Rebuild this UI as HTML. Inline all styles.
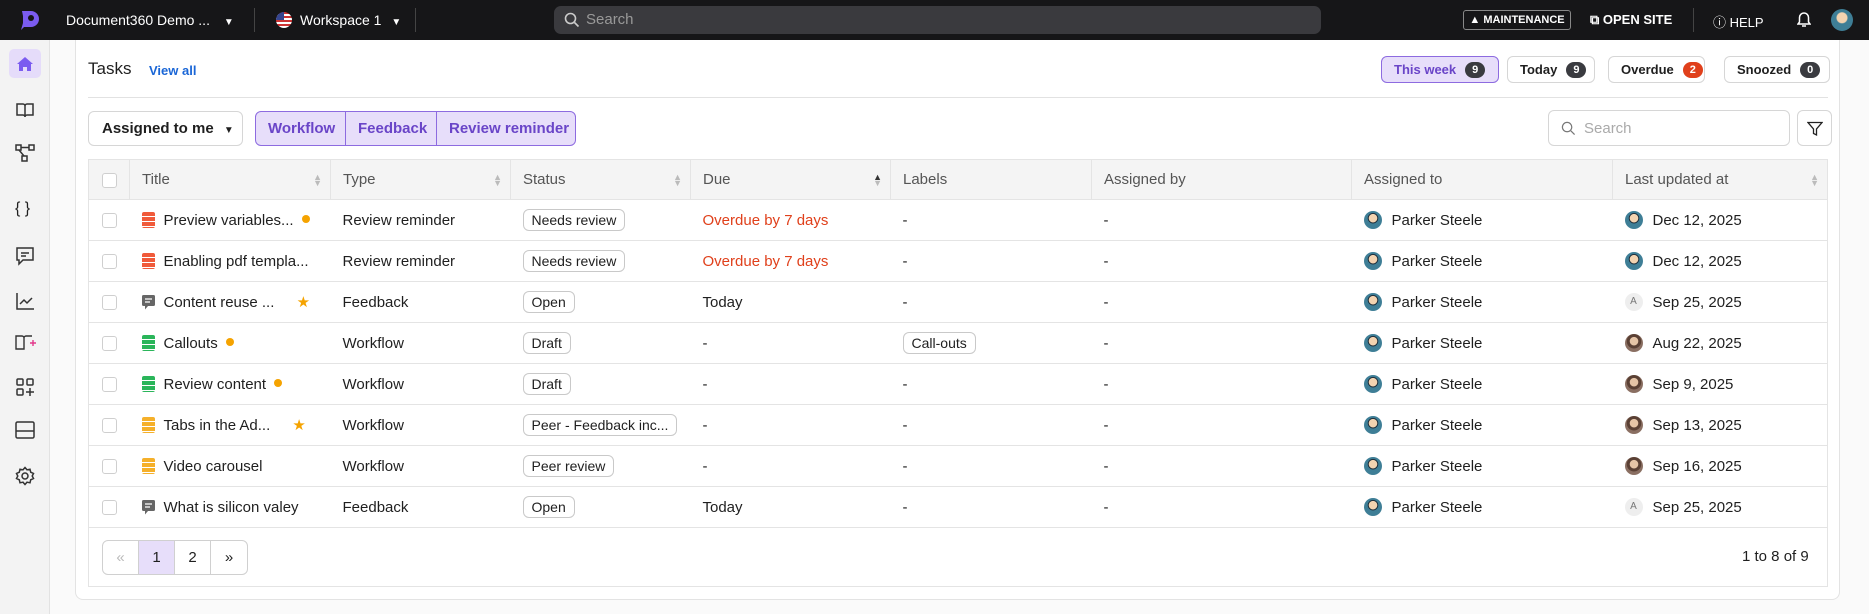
<!DOCTYPE html>
<html><head><meta charset="utf-8"><style>
*{box-sizing:border-box;margin:0;padding:0}
body{width:1869px;height:614px;overflow:hidden;font-family:"Liberation Sans",sans-serif;background:#fafafa;color:#1f1f1f;position:relative;font-size:15px}
.top{position:absolute;left:0;top:0;width:1869px;height:40px;background:#161618;color:#fff}
.top div{position:absolute}
.side{position:absolute;left:0;top:40px;width:50px;height:574px;background:#f3f3f3;border-right:1px solid #e2e2e2}
.side svg{position:absolute;left:15px}
.card{position:absolute;left:75px;top:40px;width:1765px;height:560px;background:#fff;border:1px solid #e3e3e3;border-top:none;border-radius:0 0 8px 8px}
.abs{position:absolute}
.pill{position:absolute;top:56px;height:27px;border:1px solid #d6d6d6;border-radius:6px;font-size:13px;font-weight:bold;display:flex;align-items:center;padding-left:12px}
.badge{display:inline-block;background:#3a3b40;color:#fff;border-radius:8px;font-size:11px;padding:2px 7px;margin-left:9px}
table{position:absolute;left:88px;top:159px;width:1740px;border-collapse:collapse;font-size:15px}
th{height:40px;background:#f4f4f4;color:#555;font-weight:normal;text-align:left;padding-left:12px;border:1px solid #e4e4e4;position:relative}
td{height:41px;border-bottom:1px solid #e4e4e4;padding-left:12px;white-space:nowrap}
td:first-child,th:first-child{padding-left:13px}
.cb{display:inline-block;width:15px;height:15px;border:1px solid #cfcfcf;border-radius:3px;background:#fff;vertical-align:middle}
.tag{display:inline-block;border:1px solid #c9c9c9;border-radius:6px;padding:2px 8px;font-size:14px}
.od{color:#e0401b}
.ic{display:inline-block;width:13px;height:16px;border-radius:2px;vertical-align:-3px;margin-right:9px;background:repeating-linear-gradient(#0000 0 4px,#fff 4px 5px),var(--c)}
.fb{display:inline-block;vertical-align:-3px;margin-right:9px}
.dot{display:inline-block;width:8px;height:8px;border-radius:50%;background:#f5a300;margin-left:8px;vertical-align:2px}
.av{display:inline-block;width:18px;height:18px;border-radius:50%;background:radial-gradient(circle at 50% 40%,#f3d3b0 0 4px,#1d2d3a 4.5px 5px,#3e7e96 5.5px);vertical-align:-4px;margin-right:10px}
.av2{background:radial-gradient(circle at 50% 40%,#e5c4a6 0 4px,#5a4034 4.5px 7px,#8a6f62 7.5px)}
.avA{background:#eee;color:#777;font-size:10px;text-align:center;line-height:18px;overflow:hidden}
.sort{position:absolute;right:8px;top:14px;color:#bbb;font-size:9px;line-height:6px}
</style></head><body>
<div class="top">
 <div style="left:18px;top:8px;width:24px;height:24px"><svg width="24" height="24" viewBox="0 0 24 24"><path d="M4 3h9a8 8 0 0 1 0 16H6l-3 3 2-7V8" fill="#7b5cf0"/><circle cx="13" cy="10" r="3" fill="#161618"/></svg></div>
 <div style="left:66px;top:12px;font-size:14px">Document360 Demo ... <span style="margin-left:10px;font-size:10px">▼</span></div>
 <div style="left:254px;top:8px;width:1px;height:24px;background:#444"></div>
 <div style="left:276px;top:12px;width:16px;height:16px;border-radius:50%;background:repeating-linear-gradient(#c33 0 2px,#fff 2px 4px);overflow:hidden"><div style="width:8px;height:8px;background:#35458e"></div></div>
 <div style="left:300px;top:12px;font-size:14px">Workspace 1 <span style="margin-left:6px;font-size:10px">▼</span></div>
 <div style="left:415px;top:8px;width:1px;height:24px;background:#444"></div>
 <div style="left:554px;top:6px;width:767px;height:28px;background:#3a3a3e;border-radius:7px;color:#999;font-size:15px;padding:5px 0 0 32px">Search<svg style="position:absolute;left:10px;top:6px" width="16" height="16" viewBox="0 0 16 16"><circle cx="6.5" cy="6.5" r="5" fill="none" stroke="#ccc" stroke-width="1.6"/><path d="M10.5 10.5l4 4" stroke="#ccc" stroke-width="1.6"/></svg></div>
 <div style="left:1463px;top:10px;width:108px;height:20px;border:1px solid #888;border-radius:3px;font-size:11px;font-weight:bold;text-align:center;line-height:18px">▲ MAINTENANCE</div>
 <div style="left:1590px;top:12px;font-size:13px;font-weight:bold">⧉ OPEN SITE</div>
 <div style="left:1693px;top:8px;width:1px;height:24px;background:#444"></div>
 <div style="left:1713px;top:12px;font-size:13px">ⓘ HELP</div>
 <div style="left:1797px;top:12px"><svg width="14" height="16" viewBox="0 0 14 16"><path d="M7 1a4.5 4.5 0 0 0-4.5 4.5V10L1 12h12l-1.5-2V5.5A4.5 4.5 0 0 0 7 1z" fill="none" stroke="#fff" stroke-width="1.5"/><path d="M5 14h4" stroke="#fff" stroke-width="1.5"/></svg></div>
 <div style="left:1831px;top:9px;width:22px;height:22px;border-radius:50%;background:radial-gradient(circle at 50% 40%,#f3d3b0 0 5px,#3e7e96 6px)"></div>
</div>
<div class="side">
 <div style="position:absolute;left:9px;top:9px;width:32px;height:29px;background:#e5dcfa;border-radius:5px"></div>
 <svg style="top:16px" width="20" height="16" viewBox="0 0 20 16"><path d="M10 1L2 8h2v7h4v-4h4v4h4V8h2z" fill="#7b5cf0"/></svg>
 <svg style="top:62px" width="20" height="16" viewBox="0 0 20 16" fill="none" stroke="#333" stroke-width="1.5"><path d="M2 2h6a2 2 0 0 1 2 2v11a2 2 0 0 0-2-2H2zM18 2h-6a2 2 0 0 0-2 2v11a2 2 0 0 1 2-2h6z"/></svg>
 <svg style="top:104px" width="20" height="18" viewBox="0 0 20 18" fill="none" stroke="#333" stroke-width="1.5"><rect x="1" y="1" width="5" height="5"/><rect x="14" y="1" width="5" height="5"/><rect x="7" y="12" width="5" height="5"/><path d="M6 3.5h8M4 6l5 6"/></svg>
 <div style="position:absolute;left:15px;top:160px;font-size:16px">{ }</div>
 <svg style="top:206px" width="20" height="20" viewBox="0 0 20 20" fill="none" stroke="#333" stroke-width="1.5"><path d="M2 2h16v12H8l-4 4v-4H2z M6 7h8M6 10h5"/></svg>
 <svg style="top:252px" width="20" height="18" viewBox="0 0 20 18" fill="none" stroke="#333" stroke-width="1.5"><path d="M2 1v16h17M5 12l4-4 3 3 5-5"/></svg>
 <svg style="top:294px" width="24" height="18" viewBox="0 0 24 18" fill="none" stroke="#333" stroke-width="1.4"><path d="M1 2h6a2 2 0 0 1 2 2v11H1zM17 2h-6a2 2 0 0 0-2 2v11"/><path d="M15 9h6M18 6v6" stroke="#e2388a"/></svg>
 <svg style="top:337px" width="20" height="20" viewBox="0 0 20 20" fill="none" stroke="#333" stroke-width="1.5"><rect x="2" y="2" width="6" height="6" rx="1"/><rect x="12" y="2" width="6" height="6" rx="1"/><rect x="2" y="12" width="6" height="6" rx="1"/><path d="M15 11v8M11 15h8"/></svg>
 <svg style="top:381px" width="20" height="18" viewBox="0 0 20 18" fill="none" stroke="#333" stroke-width="1.5"><rect x="1" y="1" width="18" height="16" rx="1.5"/><path d="M1 10h18"/></svg>
 <svg style="top:426px" width="20" height="20" viewBox="0 0 20 20" fill="none" stroke="#333" stroke-width="1.5"><circle cx="10" cy="10" r="3"/><path d="M10 1.5l2 2.3 3-.6.7 3 2.8 1.3-1.3 2.5 1.3 2.5-2.8 1.3-.7 3-3-.6-2 2.3-2-2.3-3 .6-.7-3L1.5 12.5 2.8 10 1.5 7.5l2.8-1.3.7-3 3 .6z"/></svg>
</div>
<div class="card"></div>
<div class="abs" style="left:88px;top:59px;font-size:17px">Tasks</div>
<div class="abs" style="left:149px;top:63px;font-size:13px;color:#1a66d6;font-weight:bold">View all</div>
<div class="pill" style="left:1381px;width:118px;background:#e7defa;border-color:#8d6be0;color:#6a45c8">This week<span class="badge">9</span></div>
<div class="pill" style="left:1507px;width:88px">Today<span class="badge">9</span></div>
<div class="pill" style="left:1608px;width:97px">Overdue<span class="badge" style="background:#e0401b">2</span></div>
<div class="pill" style="left:1724px;width:106px">Snoozed<span class="badge">0</span></div>
<div class="abs" style="left:88px;top:97px;width:1740px;height:1px;background:#e2e2e2"></div>
<div class="abs" style="left:88px;top:111px;width:155px;height:35px;border:1px solid #d6d6d6;border-radius:6px;font-size:15px;font-weight:bold;padding:8px 0 0 13px">Assigned to me <span style="font-size:10px;margin-left:6px">▼</span></div>
<div class="abs" style="left:255px;top:111px;width:321px;height:35px;border:1px solid #8d6be0;border-radius:6px;background:#e7defa;color:#6a45c8;font-size:15px;font-weight:bold;display:flex">
 <div style="width:90px;border-right:1px solid #8d6be0;padding:8px 0 0 12px">Workflow</div>
 <div style="width:91px;border-right:1px solid #8d6be0;padding:8px 0 0 12px">Feedback</div>
 <div style="padding:8px 0 0 12px">Review reminder</div>
</div>
<div class="abs" style="left:1548px;top:110px;width:242px;height:36px;border:1px solid #d6d6d6;border-radius:6px;color:#aaa;padding:9px 0 0 35px;font-size:15px">Search<svg style="position:absolute;left:12px;top:10px" width="15" height="15" viewBox="0 0 16 16"><circle cx="6.5" cy="6.5" r="5" fill="none" stroke="#777" stroke-width="1.3"/><path d="M10.5 10.5l4 4" stroke="#777" stroke-width="1.3"/></svg></div>
<div class="abs" style="left:1797px;top:110px;width:35px;height:36px;border:1px solid #d6d6d6;border-radius:6px"><svg style="position:absolute;left:9px;top:10px" width="16" height="16" viewBox="0 0 16 16"><path d="M1 1.5h14L9.5 8v6l-3-1.5V8z" fill="none" stroke="#222" stroke-width="1.3"/></svg></div>
<table>
<tr><th style="width:41px"><span class="cb"></span></th><th style="width:201px">Title<span class="sort">▲<br>▼</span></th><th style="width:180px">Type<span class="sort">▲<br>▼</span></th><th style="width:180px">Status<span class="sort">▲<br>▼</span></th><th style="width:200px">Due<span class="sort" style="color:#333">▲<br><span style="color:#bbb">▼</span></span></th><th style="width:201px">Labels</th><th style="width:260px">Assigned by</th><th style="width:261px">Assigned to</th><th>Last updated at<span class="sort">▲<br>▼</span></th></tr>
<tr><td><span class="cb"></span></td><td><span class="ic" style="--c:#f05a3a"></span>Preview variables...<span class="dot"></span></td><td>Review reminder</td><td><span class="tag">Needs review</span></td><td class="od">Overdue by 7 days</td><td>-</td><td>-</td><td><span class="av"></span>Parker Steele</td><td><span class="av"></span>Dec 12, 2025</td></tr>
<tr><td><span class="cb"></span></td><td><span class="ic" style="--c:#f05a3a"></span>Enabling pdf templa...</td><td>Review reminder</td><td><span class="tag">Needs review</span></td><td class="od">Overdue by 7 days</td><td>-</td><td>-</td><td><span class="av"></span>Parker Steele</td><td><span class="av"></span>Dec 12, 2025</td></tr>
<tr><td><span class="cb"></span></td><td><svg class="fb" width="13" height="15" viewBox="0 0 13 15"><path d="M0 1.5A1.5 1.5 0 0 1 1.5 0h10A1.5 1.5 0 0 1 13 1.5v8a1.5 1.5 0 0 1-1.5 1.5H6l-3 3.5V11H1.5A1.5 1.5 0 0 1 0 9.5z" fill="#666"/><path d="M3 4h7M3 7h5" stroke="#fff" stroke-width="1.2"/></svg>Content reuse ... <span style="color:#f5a300;margin-left:18px">★</span></td><td>Feedback</td><td><span class="tag">Open</span></td><td>Today</td><td>-</td><td>-</td><td><span class="av"></span>Parker Steele</td><td><span class="av avA">A</span>Sep 25, 2025</td></tr>
<tr><td><span class="cb"></span></td><td><span class="ic" style="--c:#2ab55a"></span>Callouts<span class="dot"></span></td><td>Workflow</td><td><span class="tag">Draft</span></td><td>-</td><td><span class="tag">Call-outs</span></td><td>-</td><td><span class="av"></span>Parker Steele</td><td><span class="av av2"></span>Aug 22, 2025</td></tr>
<tr><td><span class="cb"></span></td><td><span class="ic" style="--c:#2ab55a"></span>Review content<span class="dot"></span></td><td>Workflow</td><td><span class="tag">Draft</span></td><td>-</td><td>-</td><td>-</td><td><span class="av"></span>Parker Steele</td><td><span class="av av2"></span>Sep 9, 2025</td></tr>
<tr><td><span class="cb"></span></td><td><span class="ic" style="--c:#f5b02a"></span>Tabs in the Ad... <span style="color:#f5a300;margin-left:18px">★</span></td><td>Workflow</td><td><span class="tag">Peer - Feedback inc...</span></td><td>-</td><td>-</td><td>-</td><td><span class="av"></span>Parker Steele</td><td><span class="av av2"></span>Sep 13, 2025</td></tr>
<tr><td><span class="cb"></span></td><td><span class="ic" style="--c:#f5b02a"></span>Video carousel</td><td>Workflow</td><td><span class="tag">Peer review</span></td><td>-</td><td>-</td><td>-</td><td><span class="av"></span>Parker Steele</td><td><span class="av av2"></span>Sep 16, 2025</td></tr>
<tr><td><span class="cb"></span></td><td><svg class="fb" width="13" height="15" viewBox="0 0 13 15"><path d="M0 1.5A1.5 1.5 0 0 1 1.5 0h10A1.5 1.5 0 0 1 13 1.5v8a1.5 1.5 0 0 1-1.5 1.5H6l-3 3.5V11H1.5A1.5 1.5 0 0 1 0 9.5z" fill="#666"/><path d="M3 4h7M3 7h5" stroke="#fff" stroke-width="1.2"/></svg>What is silicon valey</td><td>Feedback</td><td><span class="tag">Open</span></td><td>Today</td><td>-</td><td>-</td><td><span class="av"></span>Parker Steele</td><td><span class="av avA">A</span>Sep 25, 2025</td></tr>
</table>
<div class="abs" style="left:88px;top:159px;width:1740px;height:428px;border:1px solid #e4e4e4;pointer-events:none"></div>
<div class="abs" style="left:102px;top:540px;height:35px;border:1px solid #d0d0d0;border-radius:6px;display:flex;font-size:15px;overflow:hidden">
 <div style="width:36px;text-align:center;line-height:33px;color:#bbb;border-right:1px solid #d0d0d0">«</div>
 <div style="width:36px;text-align:center;line-height:33px;background:#e7defa;border-right:1px solid #d0d0d0">1</div>
 <div style="width:36px;text-align:center;line-height:33px;border-right:1px solid #d0d0d0">2</div>
 <div style="width:36px;text-align:center;line-height:33px">»</div>
</div>
<div class="abs" style="left:1742px;top:548px;font-size:15px">1 to 8 of 9</div>
</body></html>
